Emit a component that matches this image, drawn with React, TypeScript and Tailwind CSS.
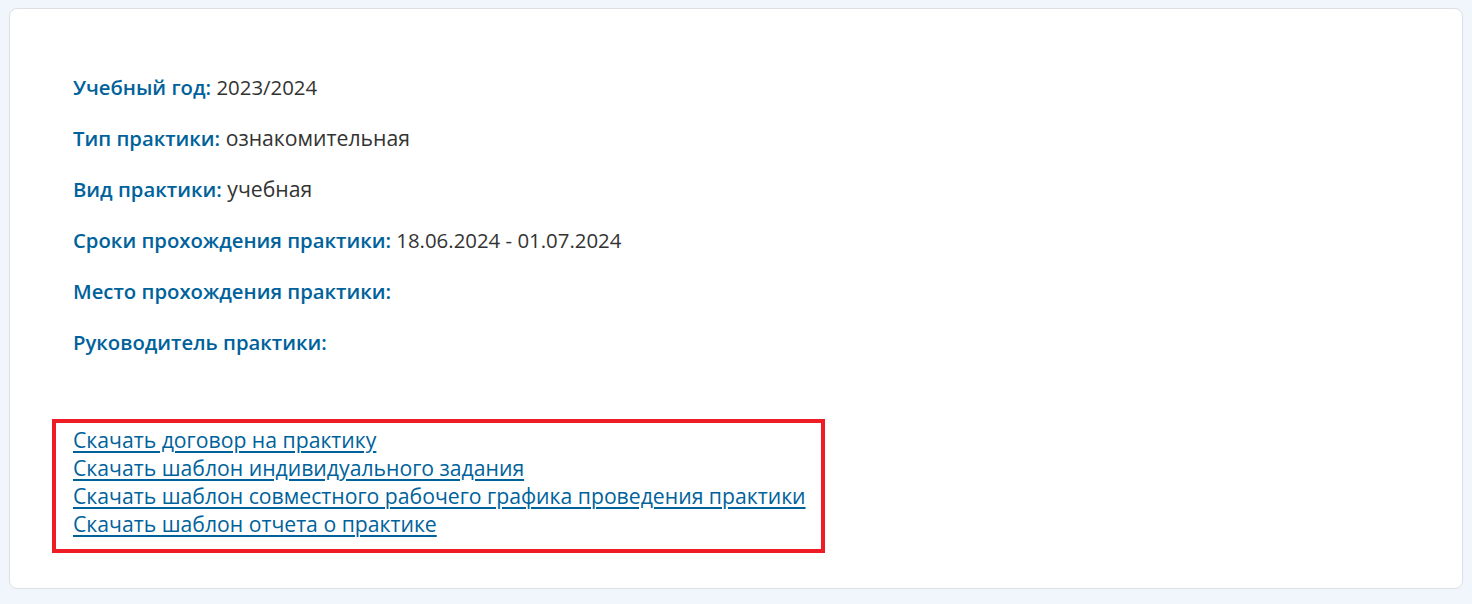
import React from "react";

const rows: [string, string, boolean][] = [
  ["Учебный год:", "2023/2024", true],
  ["Тип практики:", "ознакомительная", false],
  ["Вид практики:", "учебная", false],
  ["Сроки прохождения практики:", "18.06.2024 - 01.07.2024", true],
  ["Место прохождения практики:", "", false],
  ["Руководитель практики:", "", false],
];

const links = [
  "Скачать договор на практику",
  "Скачать шаблон индивидуального задания",
  "Скачать шаблон совместного рабочего графика проведения практики",
  "Скачать шаблон отчета о практике",
];

export default function App() {
  return (
    <div
      className="w-[1472px] h-[604px] bg-[#f0f6fc] pt-[8px] pl-[9px] pr-[9px]"
      style={{ fontFamily: '"Open Sans", "Noto Sans", sans-serif' }}
    >
      <div className="h-[581px] bg-white border border-[#dcdfe3] rounded-[8px] pl-[42px] pt-[64px]">
        <div className="flex flex-col gap-[23px] pl-[21px]">
          {rows.map(([label, value, numeric]) => (
            <div key={label} className="text-[21.2px] leading-[28px] text-[#333333]">
              <span className="font-semibold text-[20.3px] text-[#00629b]">{label}</span>
              {value ? (
                <span className={numeric ? "text-[20.4px]" : "text-[21.2px]"}> {value}</span>
              ) : null}
            </div>
          ))}
        </div>
        <div className="mt-[63px] w-[773px] border-4 border-[#ee1d25] pt-[3px] pb-[11px] pl-[17px] flex flex-col">
          {links.map((l) => (
            <a
              key={l}
              href="#"
              className="text-[21.2px] leading-[28px] text-[#00629b] underline underline-offset-[3px] decoration-[1.5px] w-fit"
            >
              {l}
            </a>
          ))}
        </div>
      </div>
    </div>
  );
}
